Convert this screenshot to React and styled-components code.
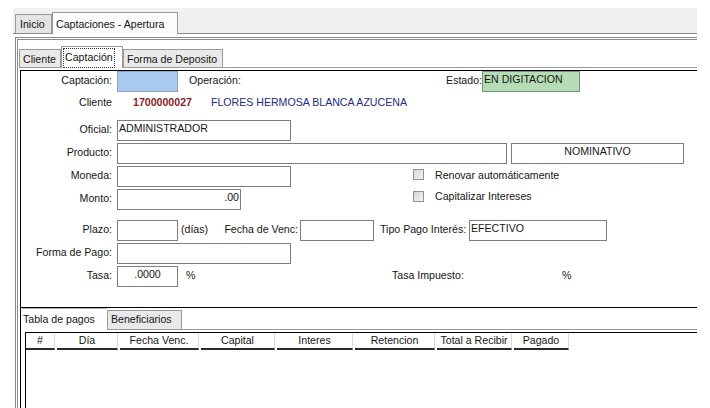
import React from "react";
import styled, { createGlobalStyle } from "styled-components";

const GlobalStyle = createGlobalStyle`
  html, body { margin: 0; padding: 0; background: #fff; }
  body {
    font-family: "Liberation Sans", Arial, sans-serif;
    font-size: 10.6px;
    color: #151515;
  }
  #root { height: 408px; overflow: hidden; }
`;

const Window = styled.div`
  margin: 8px 0 0 13px;
  width: 684px;
  height: 400px;
  display: flex;
  flex-direction: column;
  overflow: hidden;
`;

const TopBar = styled.div`
  height: 25px;
  flex-shrink: 0;
  background: #f0f0f0;
  border-bottom: 1px solid #8c8c8c;
  display: flex;
  align-items: flex-end;
  padding-left: 2px;
`;

const TopTab = styled.div`
  box-sizing: border-box;
  width: ${(p) => p.$w}px;
  height: ${(p) => (p.$active ? 22 : 19)}px;
  margin-bottom: ${(p) => (p.$active ? -1 : 0)}px;
  padding-left: ${(p) => (p.$active ? 3 : 4)}px;
  border: 1px solid #9a9a9a;
  border-bottom: none;
  background: ${(p) => (p.$active ? "#fbfbfb" : "#e4e4e4")};
  display: flex;
  align-items: center;
  white-space: nowrap;
  position: relative;
  z-index: ${(p) => (p.$active ? 1 : 0)};
`;

const OuterPanel = styled.div`
  flex: 1;
  display: flex;
  flex-direction: column;
  margin: 3px 0 0 2px;
  border-top: 3px double #8a8a8a;
  border-left: 3px double #8a8a8a;
  padding: 6px 0 0 1px;
  min-height: 0;
`;

const InnerTabs = styled.div`
  height: 21px;
  flex-shrink: 0;
  display: flex;
  align-items: flex-end;
  border-bottom: 1px solid #9a9a9a;
`;

const InnerTab = styled.div`
  box-sizing: border-box;
  width: ${(p) => p.$w}px;
  height: ${(p) => (p.$active ? 22 : 18)}px;
  margin-bottom: ${(p) => (p.$active ? -1 : 0)}px;
  padding-left: ${(p) => (p.$active ? 1 : 3)}px;
  border: 1px solid #9a9a9a;
  border-bottom: none;
  background: ${(p) => (p.$active ? "#fff" : "#e9e9e9")};
  display: flex;
  align-items: center;
  white-space: nowrap;
  position: relative;
  z-index: ${(p) => (p.$active ? 1 : 0)};
`;

const Focus = styled.span`
  border: 1px dotted #333;
  padding: 2px 1px 3px;
  line-height: 13px;
`;

const Sheet = styled.div`
  flex: 1;
  margin: 2px 0 0 1px;
  border-left: 1px solid #000;
  display: flex;
  flex-direction: column;
  min-height: 0;
`;

const FormBox = styled.div`
  box-sizing: border-box;
  height: 238px;
  flex-shrink: 0;
  border-top: 1px solid #000;
  border-bottom: 1px solid #000;
  display: flex;
  flex-direction: column;
`;

const Row = styled.div`
  display: flex;
  align-items: center;
  height: 21px;
  margin-top: ${(p) => p.$mt || 0}px;
  flex-shrink: 0;
`;

const Label = styled.span`
  width: 91px;
  flex-shrink: 0;
  text-align: right;
  padding-bottom: 3px;
  white-space: nowrap;
  margin-right: 5px;
`;

const Field = styled.div`
  box-sizing: border-box;
  width: ${(p) => p.$w}px;
  height: 21px;
  flex-shrink: 0;
  border: 1px solid ${(p) => p.$line || "#7d7d7d"};
  background: ${(p) => p.$bg || "#fff"};
  padding: 0 1px;
  line-height: 15px;
  text-align: ${(p) => p.$align || "left"};
  white-space: nowrap;
  overflow: hidden;
`;

const Gap = styled.span`
  width: ${(p) => p.$w}px;
  flex-shrink: 0;
`;

const Text = styled.span`
  width: ${(p) => (p.$w ? `${p.$w}px` : "auto")};
  flex-shrink: 0;
  text-align: ${(p) => p.$align || "left"};
  padding-bottom: 3px;
  white-space: nowrap;
`;

const Code = styled.span`
  font-weight: bold;
  color: #8c1c1c;
  padding-bottom: 3px;
  white-space: nowrap;
`;

const ClientName = styled.span`
  color: #1d2a86;
  padding-bottom: 3px;
  white-space: nowrap;
`;

const Check = styled.span`
  box-sizing: border-box;
  width: 11px;
  height: 11px;
  flex-shrink: 0;
  border: 1px solid #8f9090;
  background: linear-gradient(135deg, #d6d6d6, #f3f3f3);
  margin-bottom: ${(p) => p.$mb || 0}px;
`;

const CheckText = styled.span`
  padding-bottom: ${(p) => p.$mb || 0}px;
  white-space: nowrap;
`;

const BottomTabs = styled.div`
  height: 22px;
  flex-shrink: 0;
  display: flex;
  align-items: flex-end;
  padding-left: 1px;
`;

const BottomTab = styled.div`
  box-sizing: border-box;
  width: ${(p) => p.$w}px;
  height: ${(p) => (p.$active ? 22 : 20)}px;
  padding-left: ${(p) => (p.$active ? 1 : 3)}px;
  border-top: 1px solid ${(p) => (p.$active ? "#b4b4b4" : "#9a9a9a")};
  border-left: ${(p) => (p.$active ? "none" : "1px solid #9a9a9a")};
  border-right: ${(p) => (p.$active ? "none" : "1px solid #9a9a9a")};
  border-bottom: ${(p) => (p.$active ? "none" : "1px solid #9a9a9a")};
  background: ${(p) => (p.$active ? "#fff" : "#e9e9e9")};
  display: flex;
  align-items: center;
  padding-bottom: 2px;
  white-space: nowrap;
`;

const TabFiller = styled.div`
  flex: 1;
  height: 22px;
  box-sizing: border-box;
  border-bottom: 1px solid #9a9a9a;
`;

const GridFrame = styled.div`
  flex: 1;
  margin: 2px 0 0 4px;
  border-top: 1px solid #000;
  border-left: 1px solid #000;
`;

const HeaderRow = styled.div`
  display: flex;
  height: 17px;
`;

const HeaderCell = styled.div`
  box-sizing: border-box;
  width: ${(p) => p.$w}px;
  height: 17px;
  flex-shrink: 0;
  margin-right: 2px;
  border-bottom: 2px solid #2a2a2a;
  border-right: 1px solid #dadada;
  text-align: center;
  line-height: 15px;
  white-space: nowrap;
`;

const columns = [
  ["#", 29],
  ["Día", 61],
  ["Fecha Venc.", 79],
  ["Capital", 74],
  ["Interes", 76],
  ["Retencion", 80],
  ["Total a Recibir", 75],
  ["Pagado", 55],
];

export default function App() {
  return (
    <>
      <GlobalStyle />
      <Window>
        <TopBar>
          <TopTab $w={37}>Inicio</TopTab>
          <TopTab $w={126} $active>
            Captaciones - Apertura
          </TopTab>
        </TopBar>
        <OuterPanel>
          <InnerTabs>
            <InnerTab $w={42}>Cliente</InnerTab>
            <InnerTab $w={62} $active>
              <Focus>Captación</Focus>
            </InnerTab>
            <InnerTab $w={100}>Forma de Deposito</InnerTab>
          </InnerTabs>
          <Sheet>
            <FormBox>
              <Row>
                <Label>Captación:</Label>
                <Field $w={61} $bg="#a9c9ef" $line="#8ea6c4" />
                <Gap $w={11} />
                <Text $w={255}>Operación:</Text>
                <Text $w={38} $align="right">
                  Estado:
                </Text>
                <Field $w={98} $bg="#b6dcb6" $line="#7d8f7d">
                  EN DIGITACION
                </Field>
              </Row>
              <Row $mt={1}>
                <Label>Cliente</Label>
                <Gap $w={16} />
                <Code>1700000027</Code>
                <Gap $w={19} />
                <ClientName>FLORES HERMOSA BLANCA AZUCENA</ClientName>
              </Row>
              <Row $mt={6}>
                <Label>Oficial:</Label>
                <Field $w={174}>ADMINISTRADOR</Field>
              </Row>
              <Row $mt={2}>
                <Label>Producto:</Label>
                <Field $w={390} />
                <Gap $w={4} />
                <Field $w={173} $align="center">
                  NOMINATIVO
                </Field>
              </Row>
              <Row $mt={2}>
                <Label>Moneda:</Label>
                <Field $w={174} />
                <Gap $w={122} />
                <Check $mb={4} />
                <Gap $w={11} />
                <CheckText $mb={4}>Renovar automáticamente</CheckText>
              </Row>
              <Row $mt={2}>
                <Label>Monto:</Label>
                <Field $w={124} $align="right">
                  .00
                </Field>
                <Gap $w={172} />
                <Check $mb={7} />
                <Gap $w={11} />
                <CheckText $mb={7}>Capitalizar Intereses</CheckText>
              </Row>
              <Row $mt={10}>
                <Label>Plazo:</Label>
                <Field $w={61} />
                <Gap $w={3} />
                <Text $w={40}>(días)</Text>
                <Text $w={77} $align="right">
                  Fecha de Venc:
                </Text>
                <Gap $w={2} />
                <Field $w={74} />
                <Gap $w={6} />
                <Text $w={88}>Tipo Pago Interés:</Text>
                <Gap $w={1} />
                <Field $w={138}>EFECTIVO</Field>
              </Row>
              <Row $mt={2}>
                <Label>Forma de Pago:</Label>
                <Field $w={174} />
              </Row>
              <Row $mt={2}>
                <Label>Tasa:</Label>
                <Field $w={61} $align="center">
                  .0000
                </Field>
                <Gap $w={8} />
                <Text $w={206}>%</Text>
                <Text $w={170}>Tasa Impuesto:</Text>
                <Text>%</Text>
              </Row>
            </FormBox>
            <BottomTabs>
              <BottomTab $w={85} $active>
                Tabla de pagos
              </BottomTab>
              <BottomTab $w={75}>Beneficiarios</BottomTab>
              <TabFiller />
            </BottomTabs>
            <GridFrame>
              <HeaderRow>
                {columns.map(([name, w]) => (
                  <HeaderCell key={name} $w={w}>
                    {name}
                  </HeaderCell>
                ))}
              </HeaderRow>
            </GridFrame>
          </Sheet>
        </OuterPanel>
      </Window>
    </>
  );
}
